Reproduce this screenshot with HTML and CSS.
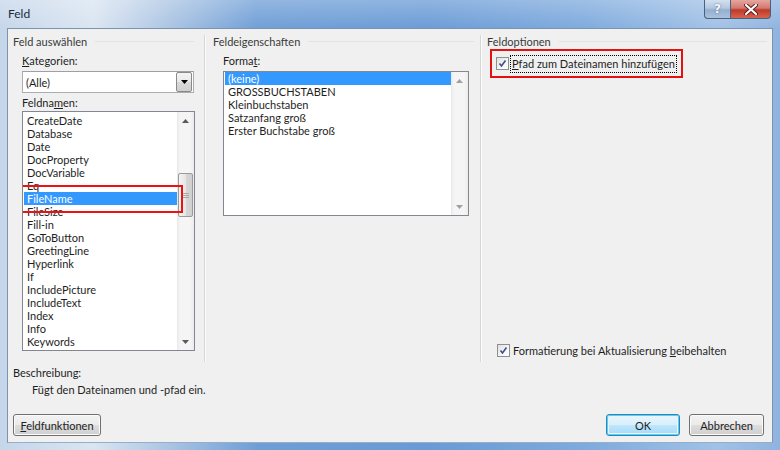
FILE: index.html
```html
<!DOCTYPE html>
<html lang="de">
<head>
<meta charset="utf-8">
<title>Feld</title>
<link rel="stylesheet" href="styles.css">
</head>
<body>
<div class="window">
  <div class="titlebar">
    <span class="title">Feld</span>
    <div class="caption">
      <div class="cbtn help">?</div>
      <div class="cbtn close">
        <svg width="14" height="11" viewBox="0 0 14 11"><path d="M2 1 L12 10 M12 1 L2 10" stroke="#5a1a1a" stroke-width="4" stroke-linecap="round"/><path d="M2 1 L12 10 M12 1 L2 10" stroke="#fff" stroke-width="2.2" stroke-linecap="round"/></svg>
      </div>
    </div>
  </div>
  <div class="client">
    <div class="groups">
      <section class="group g1">
        <div class="gh"><span>Feld auswählen</span><i class="rule"></i></div>
        <div class="gbody">
          <div class="lbl"><u>K</u>ategorien:</div>
          <div class="combo">
            <span class="cval">(Alle)</span>
            <div class="dd"><svg width="7" height="4" viewBox="0 0 7 4"><path d="M0 0 H7 L3.5 4 Z" fill="#000"/></svg></div>
          </div>
          <div class="lbl lbl2">Feldna<u>m</u>en:</div>
          <div class="listbox names">
            <ul class="items">
              <li>CreateDate</li>
              <li>Database</li>
              <li>Date</li>
              <li>DocProperty</li>
              <li>DocVariable</li>
              <li>Eq</li>
              <li class="sel">FileName</li>
              <li>FileSize</li>
              <li>Fill-in</li>
              <li>GoToButton</li>
              <li>GreetingLine</li>
              <li>Hyperlink</li>
              <li>If</li>
              <li>IncludePicture</li>
              <li>IncludeText</li>
              <li>Index</li>
              <li>Info</li>
              <li>Keywords</li>
            </ul>
            <div class="sb">
              <div class="arr"><svg width="7" height="4" viewBox="0 0 7 4"><path d="M0 4 H7 L3.5 0 Z" fill="#5a5a5a"/></svg></div>
              <div class="track"><div class="thumb"><i></i><i></i><i></i></div></div>
              <div class="arr"><svg width="7" height="4" viewBox="0 0 7 4"><path d="M0 0 H7 L3.5 4 Z" fill="#5a5a5a"/></svg></div>
            </div>
            <div class="mark"></div>
          </div>
        </div>
      </section>
      <section class="group g2">
        <div class="gh"><span>Feldeigenschaften</span><i class="rule"></i></div>
        <div class="gbody">
          <div class="lbl">Forma<u>t</u>:</div>
          <div class="listbox formats">
            <ul class="items">
              <li class="sel">(keine)</li>
              <li>GROSSBUCHSTABEN</li>
              <li>Kleinbuchstaben</li>
              <li>Satzanfang groß</li>
              <li>Erster Buchstabe groß</li>
            </ul>
            <div class="sb dis">
              <div class="arr"><svg width="7" height="4" viewBox="0 0 7 4"><path d="M0 4 H7 L3.5 0 Z" fill="#a0a0a0"/></svg></div>
              <div class="track"></div>
              <div class="arr"><svg width="7" height="4" viewBox="0 0 7 4"><path d="M0 0 H7 L3.5 4 Z" fill="#a0a0a0"/></svg></div>
            </div>
          </div>
        </div>
      </section>
      <section class="group g3">
        <div class="gh"><span>Feldoptionen</span><i class="rule"></i></div>
        <div class="gbody">
          <div class="redbox">
            <label class="chk">
              <span class="box"><svg width="9" height="9" viewBox="0 0 9 9"><path d="M1.5 4.5 L3.5 7 L7.5 1.5" fill="none" stroke="#3c4f8a" stroke-width="1.6"/></svg></span>
              <span class="ctext focus"><u>P</u>fad zum Dateinamen hinzufügen</span>
            </label>
          </div>
          <label class="chk bottom">
            <span class="box"><svg width="9" height="9" viewBox="0 0 9 9"><path d="M1.5 4.5 L3.5 7 L7.5 1.5" fill="none" stroke="#3c4f8a" stroke-width="1.6"/></svg></span>
            <span class="ctext">Formatierung bei Aktualisierung <u>b</u>eibehalten</span>
          </label>
        </div>
      </section>
    </div>
    <div class="desc">
      <div class="dlbl">Beschreibung:</div>
      <div class="dtext">Fügt den Dateinamen und -pfad ein.</div>
    </div>
    <div class="footer">
      <button class="btn fn"><u>F</u>eldfunktionen</button>
      <span class="spacer"></span>
      <button class="btn ok">OK</button>
      <button class="btn cancel">Abbrechen</button>
    </div>
  </div>
</div>
</body>
</html>
```

FILE: styles.css
```css
* { box-sizing: border-box; }
html, body { margin: 0; padding: 0; }
body {
  width: 780px;
  height: 450px;
  overflow: hidden;
  font-family: Lato, "Noto Sans", sans-serif;
  font-size: 11px;
  color: #1e1e1e;
}
u { text-decoration: underline; text-underline-offset: 1px; }

.window {
  width: 780px;
  height: 450px;
  display: flex;
  flex-direction: column;
  background:
    linear-gradient(to bottom, rgba(255,255,255,0.25) 0, rgba(255,255,255,0) 30px),
    linear-gradient(to right, #c5d6ea 0%, #dae5f1 12%, #a9c3e2 22%, #6f9ed6 33%, #6a9bd6 55%, #7eaadd 75%, #a1c1e6 92%, #8fb3df 100%);
}

.titlebar {
  height: 28px;
  display: flex;
  align-items: flex-start;
  padding-left: 8px;
}
.title {
  margin-top: 7px;
  font-size: 12px;
  color: #1b2a3a;
  line-height: 14px;
}
.caption {
  margin-left: auto;
  margin-right: 9px;
  display: flex;
}
.cbtn {
  height: 19px;
  border: 1px solid #4b607a;
  border-top: none;
  display: flex;
  align-items: center;
  justify-content: center;
}
.help {
  width: 26px;
  border-radius: 0 0 0 4px;
  background: linear-gradient(to bottom, #d4e0ee 0%, #b3c8df 45%, #94b0d0 55%, #a9c2dd 100%);
  color: #f4f7fb;
  font-family: "DejaVu Sans", sans-serif;
  font-weight: bold;
  font-size: 12px;
  text-shadow: 0 0 2px #4d6481;
  border-right: none;
}
.close {
  width: 41px;
  border-radius: 0 0 4px 0;
  background: linear-gradient(to bottom, #e5a7a0 0%, #d2796f 45%, #c0392b 55%, #d6644f 100%);
}

.client {
  margin: 0 7px;
  height: 415px;
  background: #f0f0f0;
  border: 1px solid #7c93ad;
  border-bottom-color: #97aec8;
  padding: 6px 5px 0 5px;
  display: flex;
  flex-direction: column;
}

.groups {
  display: flex;
  height: 327px;
}
.group {
  display: flex;
  flex-direction: column;
  border-right: 1px solid #d6d6d6;
  box-shadow: 1px 0 0 #fbfbfb;
}
.g1 { width: 192px; }
.g2 { width: 276px; padding-left: 8px; }
.g3 { flex: 1; padding-left: 6px; border-right: none; box-shadow: none; }

.gh {
  display: flex;
  align-items: center;
  height: 13px;
  line-height: 13px;
  color: #3a3a3a;
}
.gh .rule {
  flex: 1;
  height: 1px;
  background: #dfe3e8;
  margin-left: 8px;
}
.g1 .gh .rule { margin-right: 10px; }
.g2 .gh .rule { margin-right: 6px; }
.g3 .gh .rule { margin-right: 0; }

.gbody {
  display: flex;
  flex-direction: column;
  flex: 1;
}
.g1 .gbody { padding-left: 9px; }
.g2 .gbody { padding-left: 10px; }
.g3 .gbody { padding-left: 3px; }

.lbl {
  line-height: 13px;
  margin-top: 6px;
  margin-bottom: 4px;
}
.lbl2 { margin-top: 3px; margin-bottom: 2px; }

.combo {
  width: 172px;
  height: 22px;
  border: 1px solid #abadb3;
  border-top-color: #9ea0a6;
  background: #fff;
  display: flex;
  align-items: center;
  padding: 0 1px 0 3px;
}
.cval { flex: 1; }
.dd {
  width: 16px;
  height: 20px;
  border: 1px solid #8a8a8a;
  border-radius: 2px;
  background: linear-gradient(to bottom, #f4f4f4 0%, #e9e9e9 50%, #d9d9d9 51%, #cfcfcf 100%);
  display: flex;
  align-items: center;
  justify-content: center;
}

.listbox {
  position: relative;
  border: 1px solid #828790;
  background: #fff;
  display: flex;
  overflow: hidden;
}
.names { width: 173px; height: 240px; }
.formats { width: 246px; height: 145px; }

.items {
  list-style: none;
  margin: 0;
  padding: 0;
  flex: 1;
}
.names .items { padding-top: 2px; }
.items li {
  height: 13px;
  line-height: 13px;
  padding-left: 3px;
  margin-left: 1px;
  white-space: nowrap;
}
.items li.sel {
  background: #3399ff;
  color: #fff;
}

.sb {
  width: 17px;
  display: flex;
  flex-direction: column;
  background: linear-gradient(to right, #e8e8e8 0, #f5f5f5 3px, #f5f5f5 13px, #ececec 100%);
}
.sb .arr {
  height: 17px;
  display: flex;
  align-items: center;
  justify-content: center;
}
.sb .track {
  flex: 1;
  position: relative;
  display: flex;
  flex-direction: column;
}
.thumb {
  margin: 44px 1px 0 1px;
  height: 44px;
  border: 1px solid #9a9a9a;
  border-radius: 2px;
  background: linear-gradient(to right, #f3f3f3 0%, #e6e6e6 50%, #d6d6d6 51%, #cfcfcf 100%);
  display: flex;
  flex-direction: column;
  align-items: center;
  justify-content: center;
  gap: 1px;
}
.thumb i {
  display: block;
  width: 6px;
  height: 1px;
  background: #a8a8a8;
}

.mark {
  position: absolute;
  left: -6px;
  top: 73px;
  width: 166px;
  height: 28px;
  border: 2px solid #ee1111;
}

.redbox {
  margin-top: 1px;
  width: 193px;
  height: 29px;
  border: 2px solid #e51010;
  padding: 4px 0 0 4px;
}
.chk {
  display: flex;
  align-items: center;
  height: 17px;
}
.box {
  width: 13px;
  height: 13px;
  border: 1px solid #8e8f8f;
  background: linear-gradient(135deg, #e0e0e0 0%, #f7f7f7 60%, #ffffff 100%);
  display: flex;
  align-items: center;
  justify-content: center;
  flex: none;
}
.ctext {
  margin-left: 2px;
  line-height: 13px;
  padding: 1px 1px 2px 1px;
  white-space: nowrap;
}
.ctext.focus { outline: 1px dotted #000; outline-offset: 0; }
.chk.bottom {
  margin-top: auto;
  margin-bottom: 3px;
  margin-left: 7px;
}

.desc {
  margin-top: 4px;
  line-height: 13px;
}
.dtext { margin-top: 4px; padding-left: 19px; }

.footer {
  display: flex;
  margin-top: 18px;
  height: 22px;
}
.spacer { flex: 1; }
.btn {
  font-family: inherit;
  font-size: 11px;
  color: #1e1e1e;
  height: 22px;
  padding: 0;
  border: 1px solid #707070;
  border-radius: 3px;
  background: linear-gradient(to bottom, #f2f2f2 0%, #ebebeb 48%, #dddddd 52%, #cfcfcf 100%);
  box-shadow: inset 0 0 0 1px #fbfbfb;
}
.fn { width: 88px; }
.ok {
  width: 74px;
  border-color: #3c7fb1;
  box-shadow: inset 0 0 0 1px #48d4ff, inset 0 0 0 2px #e4f6fd;
  background: linear-gradient(to bottom, #eaf6fd 0%, #d9effb 48%, #bee6fd 52%, #a7d9f5 100%);
}
.cancel { width: 75px; margin-left: 9px; margin-right: 3px; }
```
